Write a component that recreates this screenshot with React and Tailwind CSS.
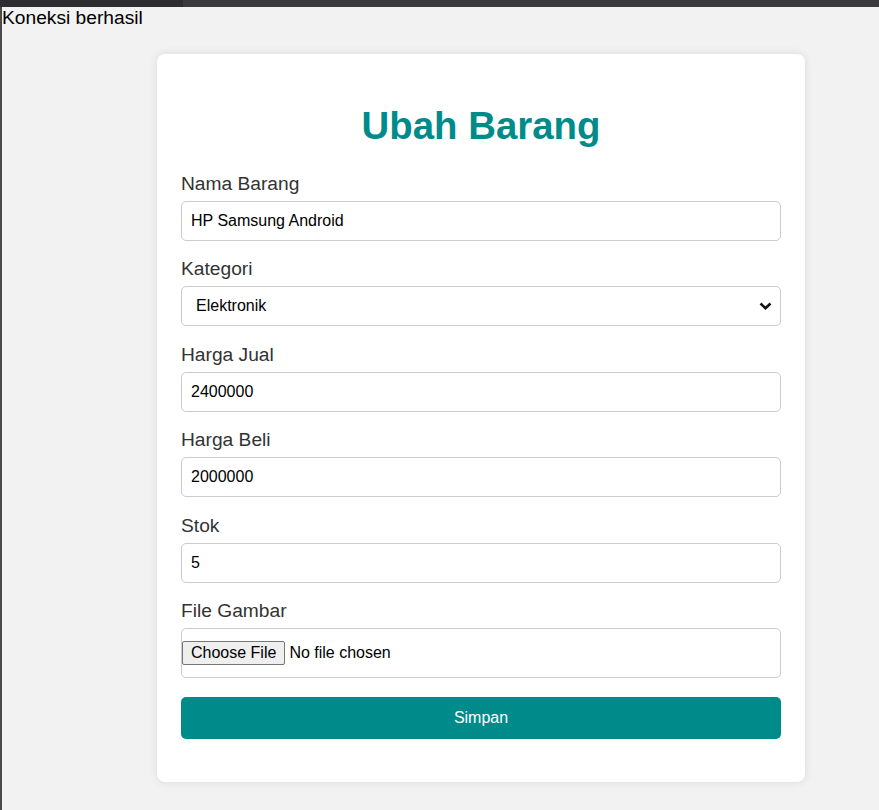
import React from "react";

const FIELDS = [
  { label: "Nama Barang", value: "HP Samsung Android" },
  { label: "Kategori", value: "Elektronik", select: true },
  { label: "Harga Jual", value: "2400000" },
  { label: "Harga Beli", value: "2000000" },
  { label: "Stok", value: "5" },
];

function Field({ label, value, select }) {
  return (
    <div className="mb-[17.4px]">
      <label className="block text-[19.2px] leading-[22px] text-[#333] mb-[6px]">
        {label}
      </label>
      {select ? (
        <div className="h-[40px] border border-[#ccc] rounded-[5px] flex items-center justify-between pl-[14px] pr-[8px] text-[16px] text-black">
          <span>{value}</span>
          <svg width="13" height="8" viewBox="0 0 13 8">
            <path d="M1.5 1.5 L6.5 6.2 L11.5 1.5" fill="none" stroke="#111" strokeWidth="2.6" />
          </svg>
        </div>
      ) : (
        <div className="h-[40px] border border-[#ccc] rounded-[5px] flex items-center px-[9px] text-[16px] text-black">
          {value}
        </div>
      )}
    </div>
  );
}

export default function App() {
  return (
    <div className="min-h-screen bg-[#f2f2f2] font-['Liberation_Sans',Arial,sans-serif] flex flex-col">
      <div className="h-[7px] bg-[#3b3b3f] flex">
        <div className="w-[183px] bg-[#2e2e32]" />
      </div>
      <div className="flex-1 border-l-2 border-[#4a4a4a]">
        <p className="text-[19.2px] leading-[22px] text-black">Koneksi berhasil</p>
        <div className="ml-[155px] mt-[25px] w-[648px] bg-white rounded-[8px] shadow-[0_0_10px_rgba(0,0,0,0.1)] px-[24px] pt-[24px] pb-[43px]">
          <h1 className="mt-[26px] mb-[25px] text-center text-[38.4px] leading-[44px] font-bold text-[#008b8b]">
            Ubah Barang
          </h1>
          {FIELDS.map((f) => (
            <Field key={f.label} {...f} />
          ))}
          <div>
            <label className="block text-[19.2px] leading-[22px] text-[#333] mb-[6px]">
              File Gambar
            </label>
            <div className="h-[50px] border border-[#ccc] rounded-[5px] flex items-center text-[16px] text-black">
              <span className="h-[24px] flex items-center px-[8px] bg-[#efefef] border border-[#767676] rounded-[2px]">
                Choose File
              </span>
              <span className="ml-[4px]">No file chosen</span>
            </div>
          </div>
          <button className="mt-[19px] w-full h-[42px] rounded-[5px] bg-[#008b8b] text-white text-[16px]">
            Simpan
          </button>
        </div>
      </div>
    </div>
  );
}
